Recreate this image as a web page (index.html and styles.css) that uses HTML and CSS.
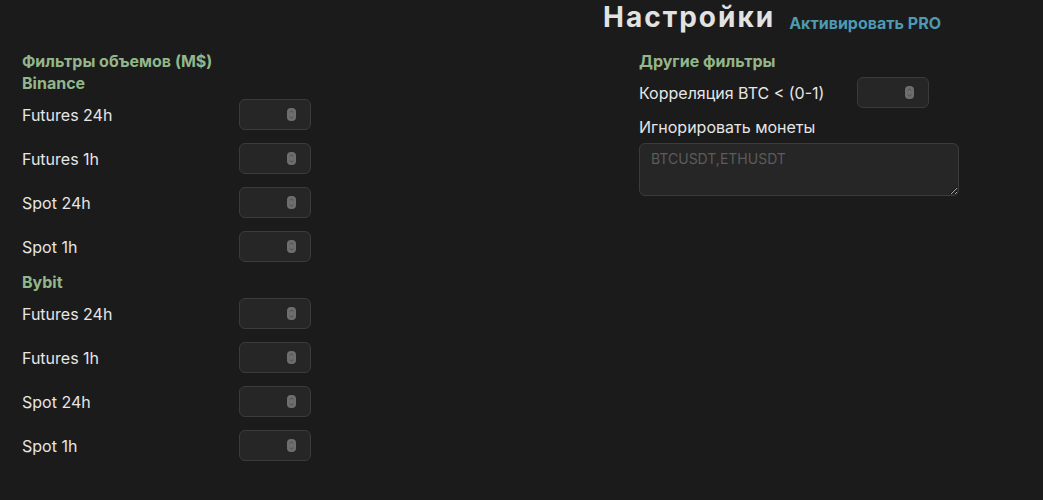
FILE: index.html
```html
<!DOCTYPE html>
<html lang="ru">
<head>
<meta charset="utf-8">
<title>Настройки</title>
<link rel="stylesheet" href="styles.css">
</head>
<body>
<header class="header">
  <h1 class="title">Настройки</h1>
  <a class="pro-link" href="#">Активировать PRO</a>
</header>
<main class="content">
  <section class="col col-left">
    <h3 class="group-title">Фильтры объемов (M$)</h3>
    <div class="exchange">
      <h3 class="group-title">Binance</h3>
      <div class="rows">
        <div class="row"><span class="label">Futures 24h</span><span class="field"><input type="number" class="num"><span class="spin"><svg width="9" height="13" viewBox="0 0 9 13"><rect x="0" y="0" width="9" height="13" rx="4" fill="#6e6e6e"/><path d="M2.6 4.6 L4.5 2.8 L6.4 4.6" fill="none" stroke="#4c4c4c" stroke-width="1"/><path d="M2.6 8.4 L4.5 10.2 L6.4 8.4" fill="none" stroke="#4c4c4c" stroke-width="1"/></svg></span></span></div>
        <div class="row"><span class="label">Futures 1h</span><span class="field"><input type="number" class="num"><span class="spin"><svg width="9" height="13" viewBox="0 0 9 13"><rect x="0" y="0" width="9" height="13" rx="4" fill="#6e6e6e"/><path d="M2.6 4.6 L4.5 2.8 L6.4 4.6" fill="none" stroke="#4c4c4c" stroke-width="1"/><path d="M2.6 8.4 L4.5 10.2 L6.4 8.4" fill="none" stroke="#4c4c4c" stroke-width="1"/></svg></span></span></div>
        <div class="row"><span class="label">Spot 24h</span><span class="field"><input type="number" class="num"><span class="spin"><svg width="9" height="13" viewBox="0 0 9 13"><rect x="0" y="0" width="9" height="13" rx="4" fill="#6e6e6e"/><path d="M2.6 4.6 L4.5 2.8 L6.4 4.6" fill="none" stroke="#4c4c4c" stroke-width="1"/><path d="M2.6 8.4 L4.5 10.2 L6.4 8.4" fill="none" stroke="#4c4c4c" stroke-width="1"/></svg></span></span></div>
        <div class="row"><span class="label">Spot 1h</span><span class="field"><input type="number" class="num"><span class="spin"><svg width="9" height="13" viewBox="0 0 9 13"><rect x="0" y="0" width="9" height="13" rx="4" fill="#6e6e6e"/><path d="M2.6 4.6 L4.5 2.8 L6.4 4.6" fill="none" stroke="#4c4c4c" stroke-width="1"/><path d="M2.6 8.4 L4.5 10.2 L6.4 8.4" fill="none" stroke="#4c4c4c" stroke-width="1"/></svg></span></span></div>
      </div>
    </div>
    <div class="exchange">
      <h3 class="group-title">Bybit</h3>
      <div class="rows">
        <div class="row"><span class="label">Futures 24h</span><span class="field"><input type="number" class="num"><span class="spin"><svg width="9" height="13" viewBox="0 0 9 13"><rect x="0" y="0" width="9" height="13" rx="4" fill="#6e6e6e"/><path d="M2.6 4.6 L4.5 2.8 L6.4 4.6" fill="none" stroke="#4c4c4c" stroke-width="1"/><path d="M2.6 8.4 L4.5 10.2 L6.4 8.4" fill="none" stroke="#4c4c4c" stroke-width="1"/></svg></span></span></div>
        <div class="row"><span class="label">Futures 1h</span><span class="field"><input type="number" class="num"><span class="spin"><svg width="9" height="13" viewBox="0 0 9 13"><rect x="0" y="0" width="9" height="13" rx="4" fill="#6e6e6e"/><path d="M2.6 4.6 L4.5 2.8 L6.4 4.6" fill="none" stroke="#4c4c4c" stroke-width="1"/><path d="M2.6 8.4 L4.5 10.2 L6.4 8.4" fill="none" stroke="#4c4c4c" stroke-width="1"/></svg></span></span></div>
        <div class="row"><span class="label">Spot 24h</span><span class="field"><input type="number" class="num"><span class="spin"><svg width="9" height="13" viewBox="0 0 9 13"><rect x="0" y="0" width="9" height="13" rx="4" fill="#6e6e6e"/><path d="M2.6 4.6 L4.5 2.8 L6.4 4.6" fill="none" stroke="#4c4c4c" stroke-width="1"/><path d="M2.6 8.4 L4.5 10.2 L6.4 8.4" fill="none" stroke="#4c4c4c" stroke-width="1"/></svg></span></span></div>
        <div class="row"><span class="label">Spot 1h</span><span class="field"><input type="number" class="num"><span class="spin"><svg width="9" height="13" viewBox="0 0 9 13"><rect x="0" y="0" width="9" height="13" rx="4" fill="#6e6e6e"/><path d="M2.6 4.6 L4.5 2.8 L6.4 4.6" fill="none" stroke="#4c4c4c" stroke-width="1"/><path d="M2.6 8.4 L4.5 10.2 L6.4 8.4" fill="none" stroke="#4c4c4c" stroke-width="1"/></svg></span></span></div>
      </div>
    </div>
  </section>
  <section class="col col-right">
    <h3 class="group-title">Другие фильтры</h3>
    <div class="rows">
      <div class="row"><span class="label label-wide">Корреляция BTC &lt; (0-1)</span><span class="field"><input type="number" class="num"><span class="spin"><svg width="9" height="13" viewBox="0 0 9 13"><rect x="0" y="0" width="9" height="13" rx="4" fill="#6e6e6e"/><path d="M2.6 4.6 L4.5 2.8 L6.4 4.6" fill="none" stroke="#4c4c4c" stroke-width="1"/><path d="M2.6 8.4 L4.5 10.2 L6.4 8.4" fill="none" stroke="#4c4c4c" stroke-width="1"/></svg></span></span></div>
    </div>
    <label class="block-label" for="ignore">Игнорировать монеты</label>
    <textarea id="ignore" class="area" placeholder="BTCUSDT,ETHUSDT"></textarea>
  </section>
</main>
</body>
</html>
```

FILE: styles.css
```css
html, body {
  margin: 0;
  padding: 0;
  background: #1b1b1b;
  color: #e4e4e4;
  font-family: Inter, "Noto Sans", sans-serif;
  color-scheme: dark;
}

.header {
  display: flex;
  align-items: baseline;
  padding-left: 603px;
  padding-top: 1px;
  height: 32px;
}

.title {
  margin: 0;
  font-size: 28px;
  line-height: 32px;
  font-weight: 700;
  letter-spacing: 2px;
  color: #e2e2e2;
}

.pro-link {
  margin-left: 14px;
  font-size: 16px;
  font-weight: 700;
  color: #4d9ab2;
  text-decoration: none;
  position: relative;
  top: 2px;
}

.content {
  display: flex;
  padding: 17px 22px 0;
}

.col-left {
  width: 617px;
}

.col-right {
  display: flex;
  flex-direction: column;
}

.group-title {
  margin: 0;
  font-size: 16px;
  line-height: 22px;
  font-weight: 700;
  color: #93b68a;
}

.exchange {
  margin-bottom: 9px;
}

.rows {
  display: flex;
  flex-direction: column;
  gap: 13px;
  margin-top: 5px;
}

.row {
  display: flex;
  align-items: center;
  height: 31px;
}

.label {
  width: 217px;
  flex: none;
  font-size: 16px;
  color: #e6e6e6;
}

.label-wide {
  width: 218px;
}

.field {
  display: flex;
  align-items: center;
  box-sizing: border-box;
  width: 72px;
  height: 31px;
  border: 1px solid #3b3b3b;
  border-radius: 6px;
  background: #262626;
  padding: 0 14px 0 8px;
}

.num {
  flex: 1;
  min-width: 0;
  width: 10px;
  background: transparent;
  border: none;
  outline: none;
  color: #e4e4e4;
  font-family: inherit;
  font-size: 14px;
  padding: 0;
  -moz-appearance: textfield;
}

.num::-webkit-inner-spin-button,
.num::-webkit-outer-spin-button {
  -webkit-appearance: none;
  margin: 0;
}

.spin {
  display: flex;
  width: 9px;
  height: 13px;
}

.block-label {
  display: block;
  margin-top: 7px;
  font-size: 16px;
  line-height: 24px;
  color: #e6e6e6;
}

.area {
  box-sizing: border-box;
  width: 320px;
  height: 53px;
  margin-top: 4px;
  padding: 6px 11px;
  border: 1px solid #3b3b3b;
  border-radius: 6px;
  background: #262626;
  color: #e4e4e4;
  font-family: inherit;
  font-size: 14px;
  line-height: 17px;
  outline: none;
}

.area::placeholder {
  color: #5c5c5c;
}
```
